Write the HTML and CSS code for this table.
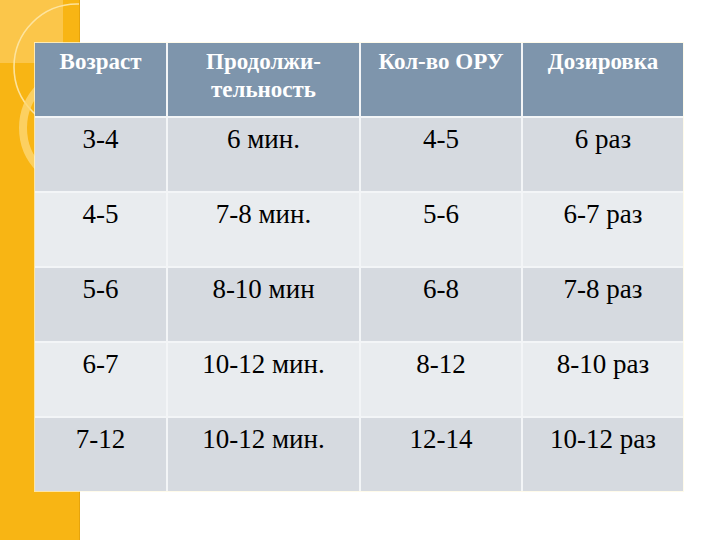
FILE: index.html
```html
<!DOCTYPE html>
<html lang="ru">
<head>
<meta charset="utf-8">
<link rel="stylesheet" href="styles.css">
</head>
<body>
<div class="slide">
  <svg class="strip" width="80" height="540" viewBox="0 0 80 540" aria-hidden="true">
    <rect x="0" y="0" width="80" height="540" fill="#f8b514"/>
    <rect x="0" y="0" width="63" height="63" fill="#fcc954" opacity="0.85"/>
    <circle cx="77" cy="67" r="63" fill="none" stroke="#fde7a8" stroke-width="1.6" opacity="0.9"/>
    <circle cx="81" cy="128" r="58" fill="none" stroke="#fcd774" stroke-width="8" opacity="0.8"/>
    <line x1="79.5" y1="0" x2="79.5" y2="540" stroke="#e6a40c" stroke-width="1"/>
  </svg>
  <div class="table">
    <p class="cell head">Возраст</p>
    <p class="cell head">Продолжи-<br>тельность</p>
    <p class="cell head">Кол-во ОРУ</p>
    <p class="cell head">Дозировка</p>

    <p class="cell odd">3-4</p>
    <p class="cell odd">6 мин.</p>
    <p class="cell odd">4-5</p>
    <p class="cell odd">6 раз</p>

    <p class="cell even">4-5</p>
    <p class="cell even">7-8 мин.</p>
    <p class="cell even">5-6</p>
    <p class="cell even">6-7 раз</p>

    <p class="cell odd">5-6</p>
    <p class="cell odd">8-10 мин</p>
    <p class="cell odd">6-8</p>
    <p class="cell odd">7-8 раз</p>

    <p class="cell even">6-7</p>
    <p class="cell even">10-12 мин.</p>
    <p class="cell even">8-12</p>
    <p class="cell even">8-10 раз</p>

    <p class="cell odd">7-12</p>
    <p class="cell odd">10-12 мин.</p>
    <p class="cell odd">12-14</p>
    <p class="cell odd">10-12 раз</p>
  </div>
</div>
</body>
</html>
```
FILE: styles.css
```css
html, body {
  margin: 0;
  padding: 0;
  background: #ffffff;
}
.slide {
  position: relative;
  width: 720px;
  height: 540px;
  overflow: hidden;
  background: #ffffff;
  padding: 43px 0 0 35px;
  box-sizing: border-box;
}
.strip {
  position: absolute;
  left: 0;
  top: 0;
}
.table {
  position: relative;
  display: grid;
  grid-template-columns: 131px 191px 160px 160px;
  grid-template-rows: repeat(6, 73px);
  gap: 2px;
  width: 648px;
  background: #f3f5f7;
  box-shadow: 0 0 0 1px rgba(255, 250, 225, 0.7);
}
.cell {
  margin: 0;
  font-family: "Times New Roman", "Liberation Serif", serif;
  font-size: 27px;
  line-height: 32px;
  text-align: center;
  color: #000000;
  padding-top: 5px;
  box-sizing: border-box;
}
.head {
  background: #7e95ac;
  color: #ffffff;
  font-weight: bold;
  font-size: 23px;
  line-height: 28px;
  padding-top: 5px;
}
.odd {
  background: #d6dae0;
}
.even {
  background: #e9ecef;
}
```
